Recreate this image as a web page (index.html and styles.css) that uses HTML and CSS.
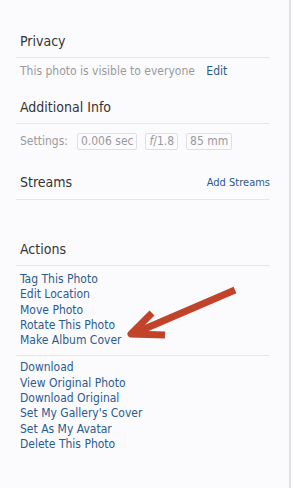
FILE: index.html
```html
<!DOCTYPE html>
<html lang="en">
<head>
    <meta charset="UTF-8">
    <meta name="viewport" content="width=device-width, initial-scale=1.0">
    <title>Photo Sidebar</title>
    <link rel="stylesheet" href="styles.css">
</head>
<body>
    <div class="sidebar">
        <div class="section privacy">
            <h3 class="section-title">Privacy</h3>
            <div class="section-body">
                <span class="muted">This photo is visible to everyone</span>
                <a href="#" class="edit-link">Edit</a>
            </div>
        </div>
        <div class="section info">
            <h3 class="section-title">Additional Info</h3>
            <div class="section-body settings">
                <span class="muted">Settings:</span>
                <span class="tag">0.006 sec</span>
                <span class="tag"><i>f</i>/1.8</span>
                <span class="tag">85 mm</span>
            </div>
        </div>
        <div class="section streams">
            <div class="section-title title-row">
                <h3>Streams</h3>
                <a href="#" class="small-link">Add Streams</a>
            </div>
        </div>
        <div class="section actions">
            <h3 class="section-title">Actions</h3>
            <ul class="link-list">
                <li><a href="#">Tag This Photo</a></li>
                <li><a href="#">Edit Location</a></li>
                <li><a href="#">Move Photo</a></li>
                <li><a href="#">Rotate This Photo</a></li>
                <li><a href="#">Make Album Cover</a></li>
            </ul>
            <ul class="link-list bordered">
                <li><a href="#">Download</a></li>
                <li><a href="#">View Original Photo</a></li>
                <li><a href="#">Download Original</a></li>
                <li><a href="#">Set My Gallery's Cover</a></li>
                <li><a href="#">Set As My Avatar</a></li>
                <li><a href="#">Delete This Photo</a></li>
            </ul>
        </div>
        <!-- annotation arrow pointing at "Make Album Cover" -->
        <svg class="arrow" width="140" height="70" viewBox="0 0 140 70">
            <path d="M122 5 L22 48" stroke="#c0432a" stroke-width="7" stroke-linecap="butt" fill="none"/>
            <path d="M39 28 L18 49 L52 50" stroke="#c0432a" stroke-width="7" stroke-linejoin="round" stroke-linecap="butt" fill="none"/>
        </svg>
    </div>
</body>
</html>
```

FILE: styles.css
```css
:root {
    --link-color: #2b5a8e;
    --muted-color: #9a9a9e;
    --line-color: #e6e6ea;
}
body {
    margin: 0;
    padding: 0;
    background: #fff;
    font-family: 'DejaVu Sans Condensed', 'DejaVu Sans', sans-serif;
    font-size: 12px;
}
.sidebar {
    position: relative;
    width: 291px;
    height: 488px;
    box-sizing: border-box;
    background: #fbfbfd;
    border-right: 2px solid #e2e2e6;
    padding: 33px 19px 0 16px;
}
.section-title {
    margin: 0;
    padding: 0 0 7px 4px;
    font-size: 14px;
    line-height: 17px;
    font-weight: normal;
    color: #333;
    border-bottom: 1px solid var(--line-color);
}
.title-row {
    display: flex;
    justify-content: space-between;
    align-items: baseline;
}
.title-row h3 { margin: 0; font-size: 14px; font-weight: normal; }
.section-body {
    padding: 6px 0 0 4px;
    line-height: 15px;
}
.privacy { margin-bottom: 20px; }
.info { margin-bottom: 24px; }
.streams { margin-bottom: 41px; }
.muted { color: var(--muted-color); }
a { color: var(--link-color); text-decoration: none; }
.edit-link { margin-left: 8px; }
.small-link { font-size: 11px; position: relative; top: -1px; }
.settings {
    display: flex;
    align-items: center;
    gap: 8px;
    padding-top: 9px;
}
.settings .muted { margin-right: 1px; }
.tag {
    border: 1px solid #e0e0e4;
    border-radius: 2px;
    padding: 0 3px;
    color: var(--muted-color);
    line-height: 15px;
}
.link-list {
    list-style: none;
    margin: 0;
    padding: 6px 0 7px 4px;
    line-height: 15.3px;
}
.link-list.bordered {
    border-top: 1px solid var(--line-color);
    padding-top: 4px;
}
.arrow {
    position: absolute;
    left: 113px;
    top: 285px;
}
```
